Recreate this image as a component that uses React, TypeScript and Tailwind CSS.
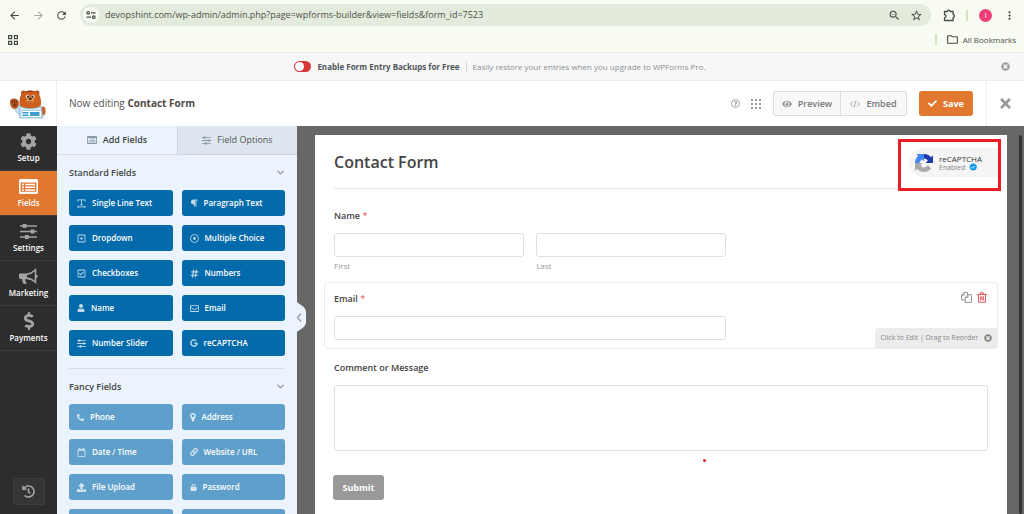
import { useState } from "react";
import type { ReactNode } from "react";
import {
  FaCheck,
  FaCog,
  FaDollarSign,
  FaEye,
  FaGoogle,
  FaHashtag,
  FaHistory,
  FaLink,
  FaLock,
  FaParagraph,
  FaPhoneAlt,
  FaRegCalendar,
  FaRegCaretSquareDown,
  FaRegCheckSquare,
  FaRegDotCircle,
  FaRegEnvelope,
  FaRegQuestionCircle,
  FaTimes,
  FaTimesCircle,
  FaUpload,
  FaUser,
} from "react-icons/fa";
import {
  MdArrowBack,
  MdArrowForward,
  MdMoreVert,
  MdOutlineFolder,
  MdRefresh,
  MdStarBorder,
  MdZoomOut,
} from "react-icons/md";
import { FiChevronDown } from "react-icons/fi";

type Field = { label: string; icon: ReactNode };

function SlidersIcon({ size }: { size: number }) {
  return (
    <svg width={size} height={size} viewBox="0 0 16 16" fill="currentColor">
      <path d="M0 2.2h16v1.4H0zM0 7.3h16v1.4H0zM0 12.4h16v1.4H0z" />
      <path d="M2.5 1h3.6v3.8H2.5zM10 6.1h3.6v3.8H10zM4.6 11.2h3.6V15H4.6z" />
    </svg>
  );
}

function TextIcon() {
  return (
    <svg width="9" height="9" viewBox="0 0 16 16" fill="none" stroke="currentColor" strokeWidth="1.5">
      <path d="M1.5 4.5V1.5h13v3M8 1.5v9M5.5 10.5h5M1 14h14M3 12.4L1 14l2 1.5M13 12.4l2 1.6-2 1.5" />
    </svg>
  );
}

function PinIcon() {
  return (
    <svg width="6" height="9" viewBox="0 0 10 16" fill="currentColor">
      <path fillRule="evenodd" d="M5 0a5 5 0 0 1 5 5c0 1.300-.5 2.200-1 3.200L6 15c-.4.900-1.600.900-2 0L1 8.200C.5 7.200 0 6.300 0 5a5 5 0 0 1 5-5zm0 2.600a2.400 2.400 0 1 0 0 4.800 2.400 2.400 0 0 0 0-4.800z" />
    </svg>
  );
}

function BullhornIcon() {
  return (
    <svg width="19" height="17" viewBox="0 0 19 17" fill="none">
      <path d="M1 5.500h7v5.500H1.500A1.500 1.500 0 0 1 0 9.500v-3A1 1 0 0 1 1 5.500z" fill="#a3a3a3" />
      <path d="M3 10.500h3.500c-.5 2 .2 3.500 1.500 4.800-1.300 1-3.300.9-3.900-.1-.5-1.400-1-3-1.100-4.700z" fill="#a3a3a3" />
      <path d="M8 6.200c3.200-.3 6-1.900 8.500-4.400v12.400C14 11.800 11.200 10.600 8 10.400" stroke="#a3a3a3" strokeWidth="1.600" />
      <path d="M17 6.700c2.400.2 2.400 3 0 3.200z" fill="#a3a3a3" />
    </svg>
  );
}

function FormIcon({ size }: { size: number }) {
  return (
    <svg width={size} height={size} viewBox="0 0 19 19" fill="currentColor">
      <path
        fillRule="evenodd"
        d="M1.500 2h16A1.500 1.500 0 0 1 19 3.500v12a1.500 1.500 0 0 1-1.500 1.500h-16A1.500 1.500 0 0 1 0 15.500v-12A1.500 1.500 0 0 1 1.500 2zM1.600 5.600v9.200h15.800V5.600z"
      />
      <path d="M3 6.800h2v1.500H3zM3 9.500h2V11H3zM3 12.200h2v1.500H3zM6.200 6.800H16v1.500H6.200zM6.200 9.500H16V11H6.200zM6.200 12.200H16v1.500H6.200z" />
    </svg>
  );
}

function Bear() {
  return (
    <svg width="36" height="30" viewBox="0 0 36 30">
      <circle cx="13.500" cy="4" r="2.500" fill="#a9501f" />
      <circle cx="27" cy="4" r="2.500" fill="#a9501f" />
      <path d="M4 18l7-3 3 7-4 4c-3-1-5-4-6-8z" fill="#c3e0ef" stroke="#76b1d0" strokeWidth=".5" />
      <path d="M0 13c0-2.500 1.500-3.500 4-3.500s4.800 1.500 4.800 4.500-1.800 6-4.300 6S0 16.500 0 13z" fill="#b85420" />
      <path d="M2 11.500l1 2.200M4.500 11v2.500M7 11.800l-1 2" stroke="#5c2c14" strokeWidth=".9" />
      <ellipse cx="4.800" cy="16" rx="1.800" ry="1.400" fill="#7d3816" />
      <ellipse cx="33" cy="22" rx="2.600" ry="4.500" fill="#c9622a" />
      <path d="M9.500 15.500C8.800 7 12 1.500 20.200 1.500S31.500 7 31 15.500c-.5 3-5 4.500-10.800 4.500S10 18.500 9.500 15.500z" fill="#cf5f1f" />
      <path d="M14 3.500c3.800-2.200 8.700-2.200 12.500 0-3.800-.6-8.700-.6-12.500 0z" fill="#8a3f18" />
      <circle cx="17.600" cy="7.500" r="1.700" fill="#fff" />
      <circle cx="23" cy="7.500" r="1.700" fill="#fff" />
      <circle cx="18" cy="7.700" r="1.100" fill="#222" />
      <circle cx="22.600" cy="7.700" r="1.100" fill="#222" />
      <ellipse cx="20.300" cy="11.500" rx="3.600" ry="2.500" fill="#f0a060" />
      <ellipse cx="20.300" cy="10" rx="1.600" ry="1" fill="#3b1c10" />
      <path d="M18 12.300q2.300 1.800 4.600 0" stroke="#7b2d12" strokeWidth=".9" fill="none" />
      <path d="M10 17c3 2 6 2.500 10 2.500s8-.5 11-2.500l2 12H9.500z" fill="#d9edf7" stroke="#76b1d0" strokeWidth=".7" />
      <path d="M11 21.500h20.500v7H11z" fill="#fff" stroke="#84bfdc" strokeWidth=".7" />
      <path d="M12.500 23h6v1.500h-6zM12.500 25.500h6V27h-6zM20 23h9.500v4H20z" fill="#3f9bd0" />
    </svg>
  );
}

function CaptchaLogo() {
  return (
    <svg width="18" height="18" viewBox="0 0 64 64">
      <path d="M64 32l-.1-1.400V4.500l-7.200 7.200A32 32 0 0 0 32 0C21.500 0 12.200 5 6.400 12.800l11.800 11.900A15.700 15.700 0 0 1 32 16.200c6.300 0 11 3.300 13.600 8.200L37.500 32z" fill="#1c3aa9" />
      <path d="M31.900 0H4.500l7.200 7.300A32 32 0 0 0 0 32c0 10.500 5 19.800 12.800 25.600l11.900-11.800A15.700 15.700 0 0 1 16.200 32c0-6.300 3.300-11 8.200-13.600l7.500 8.100z" fill="#4285f4" />
      <path d="M0 32v27.500l7.200-7.200A32 32 0 0 0 32 64c10.500 0 19.800-5 25.600-12.800L45.800 39.300A15.700 15.700 0 0 1 32 47.800c-6.300 0-11-3.300-13.600-8.200L26.500 32z" fill="#ababab" />
    </svg>
  );
}

const standardFields: Field[] = [
  { label: "Single Line Text", icon: <TextIcon /> },
  { label: "Paragraph Text", icon: <FaParagraph size={8} /> },
  { label: "Dropdown", icon: <FaRegCaretSquareDown size={9} /> },
  { label: "Multiple Choice", icon: <FaRegDotCircle size={9} /> },
  { label: "Checkboxes", icon: <FaRegCheckSquare size={9} /> },
  { label: "Numbers", icon: <FaHashtag size={9} /> },
  { label: "Name", icon: <FaUser size={8} /> },
  { label: "Email", icon: <FaRegEnvelope size={9} /> },
  { label: "Number Slider", icon: <SlidersIcon size={9} /> },
  { label: "reCAPTCHA", icon: <FaGoogle size={8} /> },
];

const fancyFields: Field[] = [
  { label: "Phone", icon: <FaPhoneAlt size={7} /> },
  { label: "Address", icon: <PinIcon /> },
  { label: "Date / Time", icon: <FaRegCalendar size={9} /> },
  { label: "Website / URL", icon: <FaLink size={8} /> },
  { label: "File Upload", icon: <FaUpload size={9} /> },
  { label: "Password", icon: <FaLock size={7} /> },
];

const menu = [
  { label: "Setup", icon: <FaCog size={17} /> },
  { label: "Fields", icon: <FormIcon size={19} /> },
  { label: "Settings", icon: <SlidersIcon size={17} /> },
  { label: "Marketing", icon: <BullhornIcon /> },
  { label: "Payments", icon: <FaDollarSign size={18} /> },
];

function BrowserBar() {
  return (
    <div className="h-[53px] shrink-0 border-b border-[#e9ede3] bg-[#f8fbf1] text-[#474b45]">
      <div className="flex h-[30px] items-center">
        <div className="flex w-20 items-center justify-between pr-3 pl-2">
          <button aria-label="Back"><MdArrowBack size={13} /></button>
          <button aria-label="Forward" className="text-[#aaaea6]"><MdArrowForward size={13} /></button>
          <button aria-label="Reload"><MdRefresh size={13} /></button>
        </div>
        <div className="flex h-[22px] flex-1 items-center rounded-full bg-[#e3ebdc] pr-2 pl-[3px]">
          <span className="flex size-4 items-center justify-center rounded-full bg-[#f8fbf1]">
            <svg width="10" height="10" viewBox="0 0 10 10" fill="none" stroke="currentColor" strokeWidth="1.200">
              <circle cx="2.200" cy="2.800" r="1.300" />
              <path d="M5 2.800h4.500M.5 7.200H5" />
              <circle cx="7.800" cy="7.200" r="1.300" />
            </svg>
          </span>
          <input
            aria-label="Address"
            className="ml-[6px] min-w-0 flex-1 bg-transparent text-[9px] text-[#4d524a] outline-none"
            defaultValue="devopshint.com/wp-admin/admin.php?page=wpforms-builder&view=fields&form_id=7523"
          />
          <div className="flex items-center gap-[9px]">
            <button aria-label="Zoom"><MdZoomOut size={13} /></button>
            <button aria-label="Bookmark"><MdStarBorder size={13} /></button>
          </div>
        </div>
        <div className="flex items-center pr-2 pl-3">
          <button aria-label="Extensions">
            <svg width="13" height="13" viewBox="0 0 13 13" fill="none" stroke="currentColor" strokeWidth="1.300" strokeLinejoin="round">
              <path d="M1.500 2.500h3a1.200 1.200 0 0 1 2.600 0h3V5.600a1.300 1.300 0 0 1 0 2.700v3.200H1.500V8.600a1.400 1.400 0 0 0 0-2.900z" />
            </svg>
          </button>
          <span className="ml-[10px] h-[11px] w-[2px] bg-[#d2e2bd]" />
          <button className="ml-[11px] size-[13px] rounded-full bg-[#ee3d78] text-[8px] leading-none text-white">I</button>
          <button aria-label="Menu" className="ml-[11px]"><MdMoreVert size={13} /></button>
        </div>
      </div>
      <div className="flex h-[19px] items-center px-2">
        <button aria-label="Apps">
          <svg width="10" height="10" viewBox="0 0 10 10" fill="none" stroke="currentColor" strokeWidth="1.200">
            <path d="M.6.600h3v3h-3zM6.400.600h3v3h-3zM.6 6.400h3v3h-3zM6.400 6.400h3v3h-3z" />
          </svg>
        </button>
        <span className="ml-auto h-[11px] w-[2px] bg-[#d2e2bd]" />
        <button className="ml-[9px] flex items-center gap-1 text-[8px]">
          <MdOutlineFolder size={13} />
          All Bookmarks
        </button>
      </div>
    </div>
  );
}

function BackupNotice() {
  const [enabled, setEnabled] = useState(false);

  return (
    <div className="relative flex h-[28px] shrink-0 items-center justify-center border-b border-[#f0eaea] bg-[#f6f7f6] pr-6 text-[8px] text-[#8c9196]">
      <label className="flex items-center gap-[6px] font-bold text-[#50565b]">
        <input type="checkbox" className="peer sr-only" checked={enabled} onChange={() => setEnabled(!enabled)} />
        <span className="flex h-[11px] w-[17px] items-center rounded-full bg-[#d63638] px-px peer-checked:justify-end peer-checked:bg-green-600">
          <span className="size-[9px] rounded-full bg-white" />
        </span>
        Enable Form Entry Backups for Free
      </label>
      <span className="mx-[6px] h-[10px] w-px bg-[#d5d7d9]" />
      <span>Easily restore your entries when you upgrade to WPForms Pro.</span>
      <button aria-label="Dismiss" className="absolute right-[14px] text-[#a0a0a0]"><FaTimesCircle size={9} /></button>
    </div>
  );
}

function Header() {
  return (
    <header className="flex h-[45px] shrink-0 items-center bg-white text-[#777]">
      <div className="flex h-full w-[57px] items-center justify-center border-r border-[#eeeeee]"><Bear /></div>
      <p className="ml-3 text-[10px] text-[#555]">
        Now editing <strong className="font-bold text-[#4a4a4a]">Contact Form</strong>
      </p>
      <div className="ml-auto flex items-center text-[9px] font-semibold">
        <button aria-label="Help"><FaRegQuestionCircle size={9} className="text-[#999]" /></button>
        <button aria-label="Apps" className="mr-3 ml-[11px]">
          <svg width="10" height="10" viewBox="0 0 10 10" fill="#999">
            <path d="M0 0h2v2H0zM4 0h2v2H4zM8 0h2v2H8zM0 4h2v2H0zM4 4h2v2H4zM8 4h2v2H8zM0 8h2v2H0zM4 8h2v2H4zM8 8h2v2H8z" />
          </svg>
        </button>
        <div className="flex h-[25px] divide-x divide-[#ddd] rounded-[3px] border border-[#ddd] bg-[#f8f8f8]">
          <button className="flex w-[67px] items-center justify-center gap-[6px]"><FaEye size={10} className="text-[#999]" />Preview</button>
          <button className="flex w-[65px] items-center justify-center gap-[6px]">
            <svg width="10" height="8" viewBox="0 0 20 16" fill="none" stroke="#aaa" strokeWidth="2">
              <path d="M5.500 3L1 8l4.500 5M14.500 3L19 8l-4.500 5M11.700 1L8.300 15" />
            </svg>
            Embed
          </button>
        </div>
        <button className="mr-[13px] ml-3 flex h-[25px] w-[54px] items-center justify-center gap-[6px] rounded-[3px] bg-[#e27730] font-bold text-white">
          <FaCheck size={9} />Save
        </button>
      </div>
      <button aria-label="Close" className="flex h-full w-[38px] items-center justify-center border-l border-[#eeeeee] text-[#999]">
        <FaTimes size={15} />
      </button>
    </header>
  );
}

function FieldGroup({ title, fields, muted, children }: { title: string; fields: Field[]; muted?: boolean; children?: ReactNode }) {
  return (
    <section>
      <button className="flex h-[35px] w-full items-center justify-between text-[9px] font-semibold text-[#444]">
        {title}
        <FiChevronDown size={11} strokeWidth={3} className="-mr-px text-[#8d99a5]" />
      </button>
      <div className="grid grid-cols-2 gap-[9px]">
        {fields.map(f => (
          <button
            key={f.label}
            className={`flex h-[26px] items-center gap-[6px] rounded-[3px] pl-2 text-[8px] font-semibold text-white ${muted ? "bg-[#5f9fcb]" : "bg-[#036aab]"}`}
          >
            <span className="opacity-75">{f.icon}</span>
            {f.label}
          </button>
        ))}
        {children}
      </div>
    </section>
  );
}

function Label({ htmlFor, children, required }: { htmlFor: string; children: ReactNode; required?: boolean }) {
  return (
    <label htmlFor={htmlFor} className="mb-[9px] block text-[9px] leading-4 font-semibold text-[#444]">
      {children} {required && <span className="font-normal text-[#e0525a]">*</span>}
    </label>
  );
}

function FormPreview() {
  return (
    <form className="relative min-h-full bg-white" onSubmit={e => e.preventDefault()}>
      <div className="mx-[19px] mb-[10px] flex h-[54px] items-center border-b border-[#e6e6e6]">
        <h1 className="text-base font-semibold text-[#444]">Contact Form</h1>
      </div>

      <div className="mx-[9px] rounded border border-transparent px-[9px] py-2">
        <Label htmlFor="first" required>Name</Label>
        <div className="grid w-3/5 grid-cols-2 gap-3 text-[8px] leading-[14px] text-[#999]">
          <div>
            <input id="first" className="block h-6 w-full rounded-[3px] border border-[#e0e0e0] px-2" />
            <label htmlFor="first" className="mt-[2px] block">First</label>
          </div>
          <div>
            <input id="last" className="block h-6 w-full rounded-[3px] border border-[#e0e0e0] px-2" />
            <label htmlFor="last" className="mt-[2px] block">Last</label>
          </div>
        </div>
      </div>

      <div className="relative mx-[9px] rounded border border-[#ececec] px-[9px] py-2">
        <Label htmlFor="email" required>Email</Label>
        <input id="email" type="email" className="block h-6 w-3/5 rounded-[3px] border border-[#e0e0e0] px-2" />
        <div className="absolute top-[9px] right-[10px] flex items-center gap-[5px]">
          <button aria-label="Duplicate">
            <svg width="11" height="11" viewBox="0 0 16 16" fill="none" stroke="#888" strokeWidth="1.300" strokeLinejoin="round">
              <path d="M6 11.500H.8V4.500L4.500.800h5v3M4.500.800v3.700H.8" />
              <path d="M10 4h5.200v11.200H6.200V7.800zM10 4v3.800H6.200" />
            </svg>
          </button>
          <button aria-label="Delete">
            <svg width="10" height="11" viewBox="0 0 14 16" fill="none" stroke="#df4a50" strokeWidth="1.400">
              <path d="M0 3.500h14M4.500 3.500L5.200 1h3.600l.7 2.500M2 3.500v11.300h10V3.500M5 6.300V12M7 6.300V12M9 6.300V12" />
            </svg>
          </button>
        </div>
        <div className="absolute right-0 bottom-0 flex h-5 items-center gap-[6px] rounded-tl bg-[#ececec] px-[5px] text-[7px] text-[#888]">
          Click to Edit | Drag to Reorder
          <FaTimesCircle size={8} />
        </div>
      </div>

      <div className="mx-[9px] mt-[2px] rounded border border-transparent px-[9px] py-2">
        <Label htmlFor="message">Comment or Message</Label>
        <textarea id="message" className="block h-[66px] w-full resize-none rounded-[3px] border border-[#e0e0e0] p-2" />
      </div>

      <button type="submit" className="mt-[15px] ml-[18px] h-[25px] w-[51px] rounded-[3px] bg-[#999] text-[9px] font-bold text-white">
        Submit
      </button>

      {/* reCAPTCHA badge, circled in red */}
      <div className="absolute top-1 right-[6px] w-[103px] border-3 border-[#ed1c24] pt-[6px] pb-[11px] pl-2">
        <div className="flex h-[29px] items-center gap-[6px] rounded-l-full bg-[#f5f5f5] pl-[6px]">
          <CaptchaLogo />
          <div className="text-[8px] leading-[9px] text-[#333]">
            <p>reCAPTCHA</p>
            <p className="flex items-center gap-1 text-[7px] text-[#888]">
              Enabled
              <svg width="8" height="8" viewBox="0 0 16 16">
                <path d="M8 0l2 1.500 2.500-.2 1 2.300L15.600 5l-.3 2.500.7 2.400-1.900 1.600-.7 2.400-2.500.3L8 16l-2-1.800-2.500-.3-.7-2.400L.9 9.900l.7-2.400L1.300 5l2.100-1.400 1-2.300 2.500.2z" fill="#139bf0" />
                <path d="M4.800 8.300L7 10.500l4.300-4.800" stroke="#fff" strokeWidth="1.600" fill="none" />
              </svg>
            </p>
          </div>
        </div>
      </div>
      <span className="absolute top-[324px] left-[56%] size-[3px] rounded-full bg-[#ed1c24]" />
    </form>
  );
}

export default function App() {
  const [active, setActive] = useState("Fields");

  return (
    <div className="flex h-screen flex-col overflow-hidden bg-white font-['Open_Sans',sans-serif]">
      <BrowserBar />
      <BackupNotice />
      <Header />

      <div className="flex min-h-0 flex-1">
        <nav className="flex w-[57px] shrink-0 flex-col bg-[#2d2d2d]">
          {menu.map(item => (
            <button
              key={item.label}
              onClick={() => setActive(item.label)}
              className={`flex h-[45px] flex-col items-center justify-between border-b border-[#3d3d3d] pt-[6px] pb-[5px] text-[8px] leading-[14px] font-semibold text-white ${active === item.label ? "bg-[#e27730]" : ""}`}
            >
              <span className={`flex h-[18px] items-center ${active === item.label ? "text-white" : "text-[#a3a3a3]"}`}>{item.icon}</span>
              {item.label}
            </button>
          ))}
          <button aria-label="Revisions" className="mx-auto mt-auto mb-[9px] flex h-[27px] w-8 items-center justify-center rounded-[3px] border border-[#3d3d3d] bg-[#353535] text-[#a3a3a3]">
            <FaHistory size={13} />
          </button>
        </nav>

        <aside className="relative w-60 shrink-0 bg-[#ebf3fc]">
          <div className="flex h-full flex-col overflow-hidden">
            <div className="grid h-[29px] shrink-0 grid-cols-2 text-[9px]">
              <button className="flex items-center justify-center gap-[6px] border-b border-[#d6dfe7] font-semibold text-[#444]">
                <span className="text-[#8b98a5]"><FormIcon size={10} /></span>
                Add Fields
              </button>
              <button className="flex items-center justify-center gap-[6px] border-b border-l border-[#ced6df] bg-[#dde6ee] text-[#555]">
                <span className="text-[#8b98a5]"><SlidersIcon size={9} /></span>
                Field Options
              </button>
            </div>
            <div className="px-3">
              <FieldGroup title="Standard Fields" fields={standardFields} />
              <hr className="mt-3 border-[#d6e0e9]" />
              <FieldGroup title="Fancy Fields" fields={fancyFields} muted>
                <button aria-label="Layout" className="h-[26px] rounded-[3px] bg-[#5f9fcb]" />
                <button aria-label="Page Break" className="h-[26px] rounded-[3px] bg-[#5f9fcb]" />
              </FieldGroup>
            </div>
          </div>
          <button aria-label="Collapse panel" className="absolute top-[174px] -right-[9px]">
            <svg width="10" height="34" viewBox="0 0 10 34">
              <path d="M0 0c0 4 10 5 10 12v10c0 7-10 8-10 12z" fill="#ebf3fc" />
              <path d="M5 13.500L1.500 17.500 5 21.500" fill="none" stroke="#8d99a5" strokeWidth="1.200" />
            </svg>
          </button>
        </aside>

        <main className="flex flex-1 bg-[#676767] pt-[9px] pl-[18px]">
          <div className="flex-1"><FormPreview /></div>
          <div className="ml-3 w-[3px] rounded-full bg-[#333]" />
          <div className="w-[2px]" />
        </main>
      </div>
    </div>
  );
}
